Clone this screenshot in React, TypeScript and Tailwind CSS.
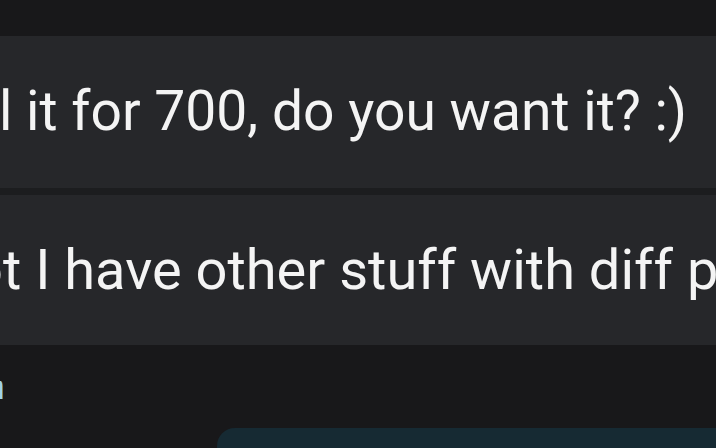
import React from "react";

export default function App() {
  const font = { fontFamily: "Roboto, 'Liberation Sans', sans-serif" };
  return (
    <div
      className="w-[716px] h-[448px] bg-[#18181a] overflow-hidden flex flex-col"
      style={font}
    >
      <div className="h-[36px] shrink-0 bg-[#18181a]" />
      <div className="h-[152px] shrink-0 bg-[#26272a] overflow-hidden pt-[48px]">
        <div className="whitespace-nowrap text-[55.2px] leading-[55px] text-[#f4f4f4] ml-[-1px]">
          l it for 700, do you want it? :)
        </div>
      </div>
      <div className="h-[7px] shrink-0 bg-[#1c1d1f]" />
      <div className="h-[150px] shrink-0 bg-[#26272a] overflow-hidden pt-[48px]">
        <div className="whitespace-nowrap text-[56px] leading-[55px] text-[#f4f4f4] ml-[-29px]">
          ot I have other stuff with diff prices
        </div>
      </div>
      <div className="flex-1 flex flex-col overflow-hidden">
        <div className="h-[36px] shrink-0" />
        <div className="h-[19px] shrink-0 overflow-hidden relative">
          <div className="whitespace-nowrap text-[36px] leading-[36px] text-[#9fd3e6] ml-[-15px] mt-[-12px]">
            n
          </div>
        </div>
        <div className="h-[28px] shrink-0" />
        <div className="ml-[217px] flex-1 bg-[#162a33] rounded-tl-[18px]" />
      </div>
    </div>
  );
}
